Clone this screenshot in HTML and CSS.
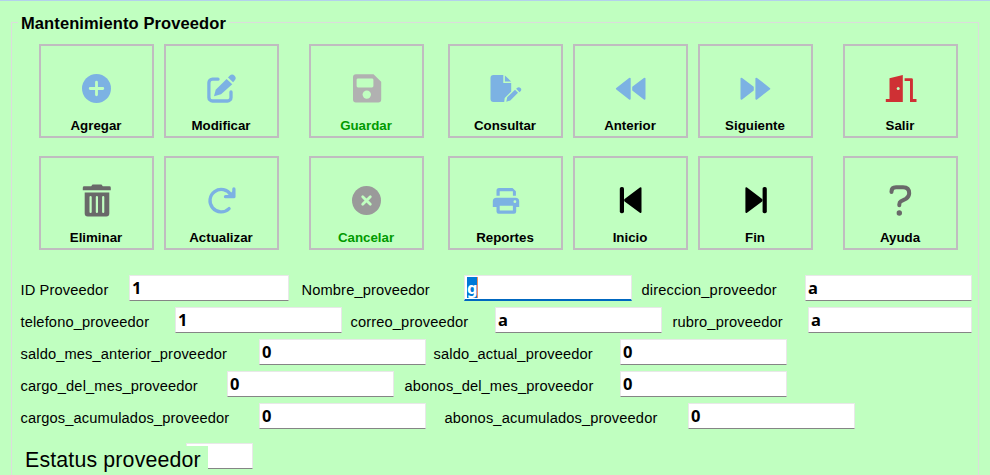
FILE: index.html
```html
<!DOCTYPE html>
<html lang="es">
<head>
<meta charset="utf-8">
<title>Mantenimiento Proveedor</title>
<link rel="stylesheet" href="styles.css">
</head>
<body>
<main class="panel">
  <h1 class="panel-title"><span>Mantenimiento Proveedor</span></h1>
  <div class="toolbar">
    <button class="tool blue"><svg viewBox="0 0 40 40"><circle cx="19.5" cy="20.5" r="14.5"/><path class="cut" d="M19.5 14.2v12.6M13.2 20.5h12.6"/></svg><span>Agregar</span></button>
    <button class="tool blue"><svg viewBox="0 0 40 40"><path class="line" d="M16 11.2H10.500a3.600 3.600 0 0 0-3.600 3.600V29.400a3.600 3.600 0 0 0 3.600 3.600H25.400a3.600 3.600 0 0 0 3.600-3.600V24"/><path d="M12 28.200L13.700 21.800 24.600 11 30.300 16.300 19 26.300Z"/><path d="M26 9.400l1.600-1.600q2.600-2.500 5 0 2.300 2.400 0 4.800l-1.500 1.700z"/></svg><span>Modificar</span></button>
    <button class="tool silver disabled"><svg viewBox="0 0 40 40"><path fill-rule="evenodd" d="M9 6.200H26.500L34.200 13.700V31.500a3 3 0 0 1-3 3H9a3 3 0 0 1-3-3V9.200a3 3 0 0 1 3-3ZM11 10.400a1.400 1.400 0 0 0-1.400 1.400V18a1.400 1.400 0 0 0 1.400 1.400H25a1.400 1.400 0 0 0 1.400-1.400V11.800A1.400 1.400 0 0 0 25 10.400Z"/><circle class="hole" cx="19.800" cy="26.600" r="4.200"/></svg><span>Guardar</span></button>
    <button class="tool blue"><svg viewBox="0 0 40 40"><path d="M7.500 7H17.300V15H25.200V23.500L18.700 30 18.200 34H7.500a3 3 0 0 1-3-3V10a3 3 0 0 1 3-3Z"/><path d="M18.900 7.500L25.200 13.500H18.900ZM20.300 33.800L21.200 29.300 29 21.700 32 24.800 24.300 32.500ZM30.200 20.700l.7-.7q1.900-1.500 3.600 0 1.600 1.700 0 3.300l-1 .9z"/></svg><span>Consultar</span></button>
    <button class="tool blue"><svg viewBox="0 0 40 40"><path class="soft" d="M18.700 10.700V30.700L5.900 20.700Z M33.500 10.700V30.700L22.200 22V19.400Z"/></svg><span>Anterior</span></button>
    <button class="tool blue"><svg viewBox="0 0 40 40"><path class="soft" d="M5.500 10.700V30.700L16.800 22V19.400Z M20.400 10.700V30.700L33.200 20.700Z"/></svg><span>Siguiente</span></button>
    <button class="tool red"><svg viewBox="0 0 40 40"><path d="M8.500 10.200L21.800 7V34H4.800V31H8.500ZM23.600 10.200H30.500Q31.900 10.200 31.900 11.600V31H35.500V34H29V13H23.600Z"/><circle class="hole" cx="17.200" cy="20.600" r="1.500"/></svg><span>Salir</span></button>

    <button class="tool dark"><svg viewBox="0 0 40 40"><path d="M7.200 6.300H14.200L15.500 4.500H24.500L25.800 6.300H32.400a1.400 1.400 0 0 1 1.400 1.400V10.300H5.800V7.700a1.400 1.400 0 0 1 1.400-1.400ZM7.700 12.400H32.300V33.500a3 3 0 0 1-3 3H10.700a3 3 0 0 1-3-3Z"/><path class="slot" d="M13.600 17V32M19.900 17V32M26.200 17V32"/></svg><span>Eliminar</span></button>
    <button class="tool blue"><svg viewBox="0 0 40 40"><path class="line" d="M27.100 28.600A11.200 11.200 0 1 1 28.800 14.900M31.900 9V16.700H23.500"/><path d="M24.500 16.700L32 10V16.700Z"/></svg><span>Actualizar</span></button>
    <button class="tool gray disabled"><svg viewBox="0 0 40 40"><circle cx="19.500" cy="20.500" r="14.500"/><path class="cut" d="M15.700 16.700l7.600 7.600M23.300 16.700l-7.600 7.600"/></svg><span>Cancelar</span></button>
    <button class="tool blue"><svg viewBox="0 0 40 40"><path d="M10.500 15.800V10.500Q10.500 8 13 8H26.500L29.900 11.300V15.800H26.900V11.200H13.700V15.800Z"/><path fill-rule="evenodd" d="M10.500 17.700H29.500Q33.200 17.700 33.200 21.400V27H30.200V31.500Q30.200 33.700 28 33.700H12.700Q10.500 33.700 10.500 31.500V27H6.800V21.400Q6.800 17.700 10.500 17.700ZM13.700 25.700V30.500H26.900V25.700Z"/><circle class="hole" cx="28.900" cy="21.700" r="1.400"/></svg><span>Reportes</span></button>
    <button class="tool black"><svg viewBox="0 0 40 40"><rect x="8.800" y="7" width="4.200" height="26.200" rx="1.800"/><path class="soft" d="M29.500 8.200V32L14.200 20.600V19.800Z"/></svg><span>Inicio</span></button>
    <button class="tool black"><svg viewBox="0 0 40 40"><rect x="26.600" y="7" width="4.200" height="26.200" rx="1.800"/><path class="soft" d="M10.400 8.200V32L25.500 20.600V19.800Z"/></svg><span>Fin</span></button>
    <button class="tool dark"><svg viewBox="0 0 40 40"><path class="line thick" d="M10.500 12V11.500Q10.500 7.300 15 7.300H22Q28.200 7.300 28.200 13.300 28.200 16.800 25 18.700L20 21.300Q18.300 22.300 18.300 24.200V25.300"/><circle cx="18.300" cy="33" r="2.700"/></svg><span>Ayuda</span></button>
  </div>

  <form class="fields">
    <div class="row row-id">
      <div class="field"><label>ID Proveedor</label><div class="box short"><span>1</span></div></div>
      <div class="field"><label>Nombre_proveedor</label><div class="box focused"><span class="selected">g</span></div></div>
      <div class="field"><label>direccion_proveedor</label><div class="box"><span>a</span></div></div>
    </div>
    <div class="row row-contact">
      <div class="field"><label>telefono_proveedor</label><div class="box"><span>1</span></div></div>
      <div class="field"><label>correo_proveedor</label><div class="box"><span>a</span></div></div>
      <div class="field"><label>rubro_proveedor</label><div class="box trimmed"><span>a</span></div></div>
    </div>
    <div class="row row-balance">
      <div class="field"><label>saldo_mes_anterior_proveedor</label><div class="box"><span>0</span></div></div>
      <div class="field"><label>saldo_actual_proveedor</label><div class="box"><span>0</span></div></div>
    </div>
    <div class="row row-month">
      <div class="field"><label>cargo_del_mes_proveedor</label><div class="box"><span>0</span></div></div>
      <div class="field"><label>abonos_del_mes_proveedor</label><div class="box"><span>0</span></div></div>
    </div>
    <div class="row row-total">
      <div class="field"><label>cargos_acumulados_proveedor</label><div class="box"><span>0</span></div></div>
      <div class="field"><label>abonos_acumulados_proveedor</label><div class="box"><span>0</span></div></div>
    </div>
  </form>
  <div class="status"><div class="box status-box"></div><label class="status-label">Estatus proveedor</label></div>
</main>
</body>
</html>
```
FILE: styles.css
```css
* { box-sizing: border-box; }

body {
  margin: 0;
  height: 475px;
  overflow: hidden;
  background: #c0ffc0;
  border-top: 1px solid #b4d1ec;
  color: #000;
  font-family: "Liberation Sans", Arial, sans-serif;
}

.panel {
  display: flow-root;
  width: 968px;
  height: 453px;
  margin: 21px 0 0 11px;
  border: 1px solid #dcdcdc;
  border-bottom: none;
}

.panel-title {
  height: 31px;
  margin: -10px 0 0 6px;
  font-size: 16.5px;
  line-height: 20px;
  letter-spacing: 0.1px;
}

.panel-title span {
  display: inline-block;
  padding: 0 3px;
  background: #c0ffc0;
}

.toolbar {
  display: grid;
  grid-template-columns: 125px 145px 139px 125px 125px 145px 115px;
  grid-template-rows: 94px 94px;
  row-gap: 18px;
  margin-left: 27px;
}

.tool {
  display: flex;
  flex-direction: column;
  align-items: center;
  justify-content: flex-start;
  width: 115px;
  height: 94px;
  padding: 22px 0 0;
  border: 2px solid #c0bcc0;
  background: none;
  color: #000;
  font: bold 13.3px/16px "Liberation Sans", Arial, sans-serif;
}

.tool span { padding-right: 1px; }

.tool svg {
  width: 40px;
  height: 40px;
  margin-bottom: 10px;
  fill: var(--ink);
  stroke: none;
}

.tool .line {
  fill: none;
  stroke: var(--ink);
  stroke-width: 3.3;
  stroke-linecap: round;
  stroke-linejoin: round;
}

.tool .thick { stroke-width: 4; }
.tool .soft { stroke: var(--ink); stroke-width: 2; stroke-linejoin: round; }
.tool .cut { fill: none; stroke: #c0ffc0; stroke-width: 2.8; stroke-linecap: round; }
.tool .slot { fill: none; stroke: #c0ffc0; stroke-width: 2.2; stroke-linecap: round; }
.tool .hole { fill: #c0ffc0; }

.blue { --ink: #7cb2e3; }
.silver { --ink: #b1b1b1; }
.gray { --ink: #9a9a9a; }
.dark { --ink: #696969; }
.red { --ink: #cf3034; }
.black { --ink: #000; }
.disabled { color: #009a00; }

.fields { margin: 25px 0 0 8px; }

.row {
  display: grid;
  height: 26px;
  margin-bottom: 6px;
}

.row-id { grid-template-columns: 269px 12px 331px 9px 331px; }
.row-contact { grid-template-columns: 322px 8px 312px 10px 300px; }
.row-balance { grid-template-columns: 406px 7px 354px; }
.row-month { grid-template-columns: 374px 10px 383px; }
.row-total { grid-template-columns: 406px 18px 411px; }

.field { display: flex; justify-content: space-between; }
.field:nth-child(2) { grid-column: 3; }
.field:nth-child(3) { grid-column: 5; }

.field label {
  padding: 7px 0 0 0.5px;
  font-size: 14.667px;
  line-height: 17px;
  letter-spacing: 0.13px;
  white-space: nowrap;
}

.box {
  width: 167px;
  height: 26px;
  padding: 1px 0 0 2px;
  border: 1px solid #e8e8e8;
  border-bottom-color: #858585;
  background: #fff;
  font: bold 16.5px/22px "Noto Sans", sans-serif;
}

.box span { display: block; width: 11px; }
.box.short { width: 160px; }
.box.trimmed { width: 164px; }
.box.focused { width: 168px; border-bottom: 2px solid #0067c0; }

.box .selected {
  height: 21px;
  border-right: 1px solid #f09060;
  background: #0078d7;
  color: #fff;
  line-height: 21px;
}

.status {
  display: grid;
  grid-template-columns: 185px 56px;
  margin: 14px 0 0 12px;
}

.status-box {
  grid-area: 1 / 1 / 2 / 3;
  justify-self: end;
  width: 67px;
  margin-right: 12px;
}

.status-label {
  grid-area: 1 / 1;
  width: 184px;
  height: 26px;
  margin-top: 3px;
  padding-left: 1px;
  background: #c0ffc0;
  font-size: 21.333px;
  line-height: 28px;
  letter-spacing: 0.16px;
  white-space: nowrap;
}
```
